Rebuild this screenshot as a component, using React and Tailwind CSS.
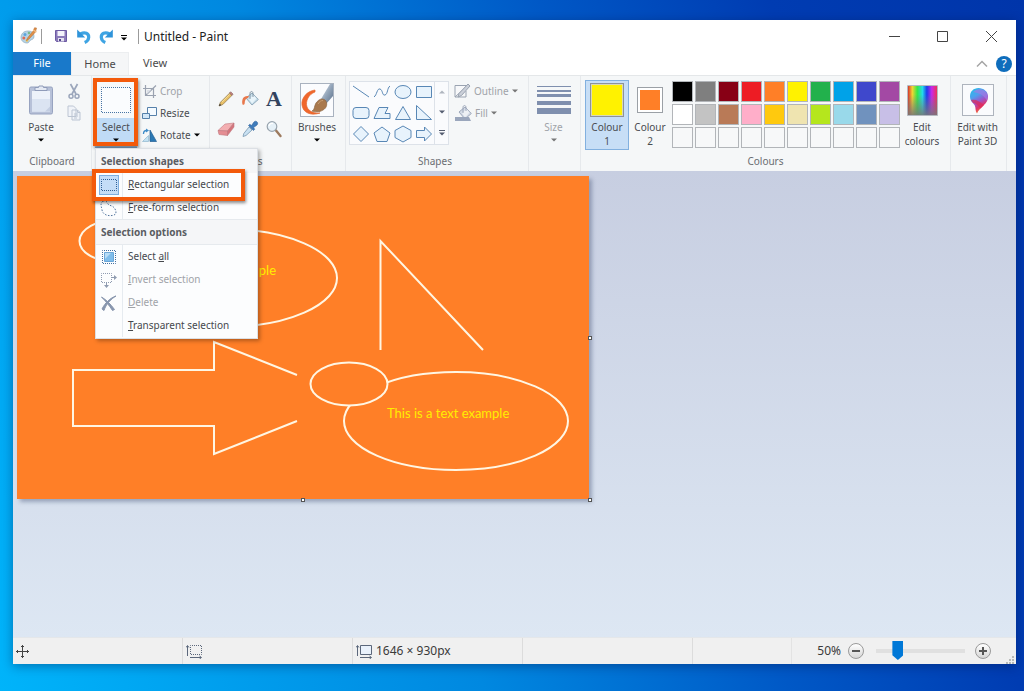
import React from "react";

const PALETTE = [
  ["Black", "bg-black"], ["Grey", "bg-[#7f7f7f]"], ["Dark red", "bg-[#880015]"], ["Red", "bg-[#ed1c24]"], ["Orange", "bg-[#ff7f27]"],
  ["Yellow", "bg-[#fff200]"], ["Green", "bg-[#22b14c]"], ["Turquoise", "bg-[#00a2e8]"], ["Indigo", "bg-[#3f48cc]"], ["Purple", "bg-[#a349a4]"],
  ["White", "bg-white"], ["Light grey", "bg-[#c3c3c3]"], ["Brown", "bg-[#b97a57]"], ["Rose", "bg-[#ffaec9]"], ["Gold", "bg-[#ffc90e]"],
  ["Light yellow", "bg-[#efe4b0]"], ["Lime", "bg-[#b5e61d]"], ["Light turquoise", "bg-[#99d9ea]"], ["Blue-grey", "bg-[#7092be]"], ["Lavender", "bg-[#c8bfe7]"],
];

function Caret({ className = "text-black" }) {
  return (
    <svg viewBox="0 0 6 4" className={`h-[4px] w-[6px] shrink-0 ${className}`}>
      <path d="M0 0.5h6L3 3.5z" fill="currentColor" />
    </svg>
  );
}

function Group({ label, className = "", children }) {
  return (
    <section className={`relative flex shrink-0 flex-col border-r border-[#e6e9ec] ${className}`}>
      <div className="flex h-[75px] items-start pt-1">{children}</div>
      {label && <h2 className="h-5 text-center leading-5 text-[#6a6d72]">{label}</h2>}
    </section>
  );
}

function BigButton({ icon, className = "", children, second, caret }) {
  return (
    <button className={`flex h-[70px] shrink-0 flex-col items-center ${className}`}>
      <span className="flex h-10 items-center justify-center">{icon}</span>
      <span className="leading-[14px]">{children}</span>
      {second && <span className="leading-[14px]">{second}</span>}
      {caret && <span className="flex h-3 items-center"><Caret className={caret} /></span>}
    </button>
  );
}

function SmallButton({ icon, caret, className = "text-[#4a4d52]", children }) {
  return (
    <button className={`flex h-[22px] items-center gap-[3px] whitespace-nowrap ${className}`}>
      {icon}
      <span>{children}</span>
      {caret && <Caret className={caret} />}
    </button>
  );
}

const PaintLogo = () => (
  <svg viewBox="0 0 18 18" className="h-[18px] w-[18px]">
    <path d="M8 4C3 4 1 7.500 1 10.500S3.500 16 7 16c2 0 2-1.500 3-2.500 1.500-1.300 4-.8 4-4C14 6 12 4 8 4z" fill="#b4d3e6" stroke="#8faabf" strokeWidth=".7" />
    <circle cx="5" cy="7.500" r="1.500" fill="#5da4dc" /><circle cx="9" cy="6" r="1.300" fill="#7fb98a" />
    <circle cx="3.800" cy="11" r="1.500" fill="#dd6c57" /><circle cx="7" cy="13.500" r="1.300" fill="#eec45c" />
    <path d="M16.500 1 14.500 0.800 13.500 3.500 7.500 11l-1 2.500 2.500-1.500 6.500-7z" fill="#e09048" stroke="#bb7136" strokeWidth=".6" />
    <path d="m13 3 3.500 2" stroke="#efc08a" strokeWidth="1.300" />
  </svg>
);

const SaveIcon = () => (
  <svg viewBox="0 0 12 12" className="h-3 w-3">
    <path d="M.5.5h11v11h-10l-1-1z" fill="#8b7bba" stroke="#6d5ba3" />
    <path d="M2.500 1h7v5h-7z" fill="#f4f3fa" /><path d="M3 8h6v3.500H3z" fill="#e5e3ef" /><path d="M4 9h2v2H4z" fill="#52438a" />
  </svg>
);

const UndoIcon = ({ flip }) => (
  <svg viewBox="0 0 14 15" className={flip ? "h-[15px] w-[14px] -scale-x-100" : "h-[15px] w-[14px]"}>
    <path d="M3.500 5C8 2.500 12 4.500 11.700 8.500c-.2 2.300-1.700 4-4 5" fill="none" stroke="#3ea4e3" strokeWidth="3.200" />
    <path d="M.2.500v8h8z" fill="#2f94da" />
  </svg>
);

const PasteIcon = () => (
  <svg viewBox="0 0 26 32" className="h-8 w-[26px]">
    <rect x="1.500" y="3" width="23" height="27" rx="1.500" fill="#b7c1d8" stroke="#97a3c0" />
    <path d="M4 7h18v20.500H4z" fill="#edf2fa" />
    <path d="M4 15h18v12.500H4z" fill="#dbe4f2" />
    <path d="M7 6.500h12v-3h-3.500L15 2h-4l-.5 1.500H7z" fill="#e4e9f3" stroke="#8f9bb9" />
    <path d="M17 27.500h5v-5z" fill="#c3cee2" />
  </svg>
);

const CutIcon = () => (
  <svg viewBox="0 0 12 17" className="h-[17px] w-3" fill="none" stroke="#9ba6bb">
    <path d="M2.500 1 8 11M9.500 1 4 11" strokeWidth="1.700" />
    <circle cx="3" cy="13.300" r="2" strokeWidth="1.500" /><circle cx="9" cy="13.300" r="2" strokeWidth="1.500" />
  </svg>
);

const CopyIcon = () => (
  <svg viewBox="0 0 14 16" className="h-4 w-[14px]" fill="#f0f3f8" stroke="#bcc5d3">
    <path d="M1 1h5.500L9 3.500v8H1zM5 5h5.500L13 7.500V15H5z" />
    <path d="M10.500 5v2.500H13M7 9h4M7 11h4M7 13h3" fill="none" />
  </svg>
);

const CropIcon = () => (
  <svg viewBox="0 0 15 15" className="h-[15px] w-[15px]" fill="none" stroke="#9aa2b0" strokeWidth="1.200">
    <path d="M3.500 1v10.500H14M1 4.500h10.500V14M3.500 11.500 14 1.500" /><path d="M5 6v4l4-4z" fill="#dce0e7" stroke="none" />
  </svg>
);

const ResizeIcon = () => (
  <svg viewBox="0 0 15 15" className="h-[15px] w-[15px]" fill="#f4faff" stroke="#5580aa">
    <path d="M5.500 1.500h9v8h-9z" /><path d="M.5 7.500h7v5h-7z" fill="#d2e7f8" />
  </svg>
);

const RotateIcon = () => (
  <svg viewBox="0 0 15 15" className="h-[15px] w-[15px]">
    <path d="M.5 13.500h6v-6z" fill="#c3e2f3" stroke="#8fb7ce" strokeWidth=".7" />
    <path d="M8 13.500h6.500L8 2z" fill="#2a78b4" stroke="#225e92" strokeWidth=".7" />
    <path d="M1.500 6c0-3 1-3.500 3-3.500" fill="none" stroke="#3f8cc8" strokeWidth="1.300" /><path d="M4 .5v4l3-2z" fill="#3f8cc8" />
  </svg>
);

const PencilIcon = () => (
  <svg viewBox="0 0 18 18" className="h-[18px] w-[18px]">
    <path d="m2 16 1.500-3.800 9.200-9.200 2.300 2.300-9.200 9.200z" fill="#e8c068" stroke="#8d7447" strokeWidth=".7" />
    <path d="m12.500 3 1.200-1.200 2.400 2.400-1.100 1.200z" fill="#c98480" stroke="#7c5a58" strokeWidth=".6" />
    <path d="m2 16 .8-2.200 1.500 1.400z" fill="#333" /><path d="m5 12 7.500-7.500" stroke="#fae4a0" strokeWidth=".8" />
  </svg>
);
const BucketIcon = ({ grey }) => (
  <svg viewBox="0 0 18 18" className="h-[18px] w-[18px]">
    <path d="m5 8 6-5 6.300 6.500L11 15z" fill={grey ? "#d4dbe6" : "#c8dfeb"} stroke={grey ? "#96a1b5" : "#87a2b4"} strokeWidth=".9" />
    <path d="m8 9 4.500-4 3 3.500-4.500 5z" fill={grey ? "#edf0f5" : "#e9f5fb"} />
    <path d="M9 9V3.500C9 .8 12 .8 12 3.500V7" fill="none" stroke={grey ? "#96a1b5" : "#7d909f"} strokeWidth=".9" />
    {grey ? <path d="M1 13h14l2 4H1z" fill="#9aa6bc" /> : <path d="M8 6C4.500 5.500 2 7 1.500 9.500c-.4 1.500-.5 3 0 5 1.200.8 2.200 0 2.200-1.500C3.800 10 5 8.500 7 8z" fill="#e8784c" />}
  </svg>
);
const EraserIcon = () => (
  <svg viewBox="0 0 18 18" className="h-[18px] w-[18px]" stroke="#c07880" strokeWidth=".6">
    <path d="m1 10.500 7-6.500 9-1-6.500 8z" fill="#f3aeb1" /><path d="m1 10.500 9.500.5v4.500L2 14.500z" fill="#e58e93" /><path d="m10.500 11 6.500-8v4l-6.500 8.500z" fill="#d4747c" />
  </svg>
);
const PickerIcon = () => (
  <svg viewBox="0 0 18 18" className="h-[18px] w-[18px]">
    <path d="m8 7 3 3-6 5.500-3 1 .8-3z" fill="#c9e1f2" stroke="#7696ae" strokeWidth=".8" />
    <path d="m7.500 5.500 1.300-1.200 1.700 1.200L13 2c2-2.200 5 .8 3 3l-3.500 2.600 1.200 1.700-1.300 1.200z" fill="#3f7cbb" stroke="#2f629b" strokeWidth=".6" />
  </svg>
);
const ZoomIcon = () => (
  <svg viewBox="0 0 18 18" className="h-[18px] w-[18px]">
    <path d="m11 10.500 4.500 5.500" stroke="#9d7a5e" strokeWidth="2.400" strokeLinecap="round" />
    <circle cx="7" cy="6.500" r="4.800" fill="#e6f1f8" stroke="#98a4ae" strokeWidth="1.200" /><path d="M4 6c.5-2 2-3 4-2.500" fill="none" stroke="white" strokeWidth="1.300" />
  </svg>
);

const BrushArt = () => (
  <svg viewBox="0 0 34 34" className="h-[34px] w-[34px]">
    <defs><linearGradient id="steel" x2="1" y2="1"><stop stopColor="#e3eaf2" /><stop offset=".5" stopColor="#93a5b9" /><stop offset="1" stopColor="#5b708a" /></linearGradient></defs>
    <rect x=".5" y=".5" width="33" height="33" fill="#fbfcfe" stroke="#a9b2bf" />
    <path d="M15 7C7 8 1 15 2 22c1 8 9 11 18 8-5 .5-11-1-13-6-2-6 2-13 8-15z" fill="#f0672c" stroke="#e4672f" strokeWidth=".7" />
    <path d="M21 16 30 1h3v12l-7 8z" fill="url(#steel)" />
    <path d="M12 28c3-1 2-5 4-8 3-4 6-5 9-3 3 3 2 8-2 10-4 2.500-8 2-11 1z" fill="#a9794d" stroke="#8c6440" strokeWidth=".7" />
    <path d="M18 21c1.500-2.500 3-3.500 5-3.500" fill="none" stroke="#c9a074" />
  </svg>
);

const SHAPES = [
  ["Line", <path d="m1 3 16 11" />],
  ["Curve", <path d="M1 14c3-2 3-9 6-8s2 7 5 6 2-7 5-9" />],
  ["Oval", <ellipse cx="9" cy="9" rx="8" ry="6.500" />],
  ["Rectangle", <path d="M1.500 3.500h15v11h-15z" />],
  ["Rounded rectangle", <rect x="1" y="3.500" width="16" height="11" rx="3" />],
  ["Polygon", <path d="M6 3.500h9l-3 6h5v5H1z" />],
  ["Triangle", <path d="M9 2.500 16.500 15.500h-15z" />],
  ["Right triangle", <path d="M1.500 1.500v14h15z" />],
  ["Diamond", <path d="m9 1.500 7.500 7.500L9 16.500 1.500 9z" />],
  ["Pentagon", <path d="m9 2 8 6-3 8.500H4L1 8z" />],
  ["Hexagon", <path d="m9 1 8 4.500v7L9 17l-8-4.500v-7z" />],
  ["Right arrow", <path d="M1.500 5.500h8V2l7 7-7 7v-3.500h-8z" />],
];

const OutlineIcon = () => (
  <svg viewBox="0 0 17 16" className="h-4 w-[17px]" stroke="#9aa3b1">
    <path d="M1 2.500h12.500L1 14z" fill="#f7f8fa" /><path d="M1 14h11V8" fill="none" /><path d="m4 14 1-3.500L14 1l2 2-8.500 9.500z" fill="#cbd0d9" />
  </svg>
);

const SpectrumIcon = () => (
  <svg viewBox="0 0 31 31" className="h-[31px] w-[31px]">
    <defs>
      <linearGradient id="hue"><stop offset="0" stopColor="#d63530" /><stop offset=".15" stopColor="#f3d432" /><stop offset=".32" stopColor="#33e748" /><stop offset=".5" stopColor="#23dbea" /><stop offset=".65" stopColor="#1c3cec" /><stop offset=".82" stopColor="#ca28e8" /><stop offset="1" stopColor="#ed3155" /></linearGradient>
      <linearGradient id="sat" x2="0" y2="1"><stop offset=".3" stopColor="#777" stopOpacity="0" /><stop offset="1" stopColor="#777" stopOpacity=".9" /></linearGradient>
    </defs>
    <path d="M1 1h29v29H1z" fill="url(#hue)" /><path d="M.5.5h30v30H.5z" fill="url(#sat)" stroke="#b4b9c0" />
  </svg>
);

const Paint3DIcon = () => (
  <svg viewBox="0 0 32 32" className="h-8 w-8">
    <defs><linearGradient id="drop" x1=".2" y1="0" x2=".6" y2="1"><stop stopColor="#27bde9" /><stop offset=".3" stopColor="#4e9fee" /><stop offset=".55" stopColor="#9b55cb" /><stop offset=".75" stopColor="#df346f" /><stop offset="1" stopColor="#f48a27" /></linearGradient></defs>
    <rect x=".5" y=".5" width="31" height="31" fill="#fafbfd" stroke="#aeb4bd" />
    <path d="M16.500 4C11.500 4 8 7.500 8 12.500c0 5 3.500 6.500 4.800 9C14 24 13 27 15 29.500c1-3 4-5.500 7-8.500 2.500-2.300 4-5 4-8.500C26 7.500 21.500 4 16.500 4z" fill="url(#drop)" />
    <path d="M11 8c3-3 8-4 12-1 3 3 3 7 2 10-2-5-7-8-14-9z" fill="#a07be6" opacity=".7" />
    <path d="M9 16c5-1 8 1 13 5l-3.500 3.500C16 21 13 19 11 19z" fill="#e02a58" opacity=".7" />
  </svg>
);

const dotted = "h-[18px] w-[18px]";
const RectSelectIcon = () => (
  <svg viewBox="0 0 18 18" className={dotted}><path d="M1.500 3.500h15v11h-15z" fill="none" stroke="#2f5f94" strokeDasharray="1 1" strokeDashoffset=".5" /></svg>
);
const FreeFormIcon = () => (
  <svg viewBox="0 0 18 18" className={dotted}><path d="M3 2c3-1 4 1 5 3s5 1 7 5 1 6-3 6.500S3 16 2 11 0 5 3 2z" fill="none" stroke="#52759e" strokeDasharray="1.500 1.500" /></svg>
);
const SelectAllIcon = () => (
  <svg viewBox="0 0 18 18" className={dotted}><path d="M2.500 2.500h13v13h-13z" fill="none" stroke="#426e9e" strokeDasharray="1 1" strokeDashoffset=".5" /><path d="M4.500 4.500h9v9h-9z" fill="#7fbdeb" stroke="#6ba7d8" /><path d="M5 5h6l-6 6z" fill="#b7dcf6" /></svg>
);
const InvertIcon = () => (
  <svg viewBox="0 0 18 18" className={dotted}><path d="M1.500 2.500h10v9h-10z" fill="none" stroke="#8f9bb0" strokeDasharray="1 1" strokeDashoffset=".5" /><path d="M12 6.500h3M6.500 12v3" fill="none" stroke="#8f9bb0" /><path d="M14 4v5l3-2.500zM4 14h5l-2.500 3z" fill="#8f9bb0" /></svg>
);
const DeleteIcon = () => (
  <svg viewBox="0 0 18 18" className={dotted}><path d="M1.500 3c5 3 9 7 13 12.500L12.500 16.500C9 11 5.500 7 1.500 3zM16 2C11 5 6 10 4 16.500L2 15C5 9 10 4 16 2z" fill="#8896ae" stroke="#8896ae" /></svg>
);

function MenuItem({ icon, disabled, active, accel, before = "", after = "" }) {
  return (
    <li role="none" className="relative">
      <button role="menuitem" disabled={disabled} className={`flex h-[23px] w-full items-center whitespace-nowrap ${disabled ? "text-[#a0a3a8]" : "text-[#45484d]"}`}>
        <span className="flex h-full w-[27px] items-center justify-center border-r border-[#e6ebf0]">
          <span className={active ? "flex h-5 w-5 items-center justify-center border border-[#7eafe0] bg-[#c4ddf7]" : "flex h-5 w-5 items-center justify-center"}>{icon}</span>
        </span>
        <span className="pl-[5px]">{before}<u>{accel}</u>{after}</span>
      </button>
      {active && <span className="pointer-events-none absolute -left-1 -top-1 right-3 z-10 h-8 border-4 border-[#f35a0b] shadow-[1px_2px_3px_rgba(0,0,0,0.45)]" />}
    </li>
  );
}

function SelectionMenu() {
  const heading = "whitespace-nowrap bg-[#f5f6f8] pl-[5px] font-bold text-[#5a5d62]";
  return (
    <div role="menu" aria-label="Select" className="absolute left-[3px] top-[72px] z-10 w-[163px] border border-[#dce0e5] bg-[#fcfdfe] pb-px shadow-[2px_2px_4px_rgba(0,0,0,0.3)]">
      <h3 className={`${heading} h-6 leading-6`}>Selection shapes</h3>
      <ul role="none">
        <MenuItem icon={<RectSelectIcon />} active accel="R" after="ectangular selection" />
        <MenuItem icon={<FreeFormIcon />} accel="F" after="ree-form selection" />
      </ul>
      <h3 className={`${heading} h-[26px] border-y border-[#e6eaee] leading-6`}>Selection options</h3>
      <ul role="none">
        <MenuItem icon={<SelectAllIcon />} before="Select " accel="a" after="ll" />
        <MenuItem icon={<InvertIcon />} disabled accel="I" after="nvert selection" />
        <MenuItem icon={<DeleteIcon />} disabled accel="D" after="elete" />
        <MenuItem accel="T" after="ransparent selection" />
      </ul>
    </div>
  );
}

function TitleBar() {
  return (
    <header className="flex h-8 shrink-0 items-center bg-white pl-[7px]">
      <PaintLogo />
      <span className="ml-[3px] h-[15px] w-px bg-[#9b9b9b]" />
      <button aria-label="Save" className="ml-[13px]"><SaveIcon /></button>
      <button aria-label="Undo" className="ml-[10px]"><UndoIcon /></button>
      <button aria-label="Redo" className="ml-2"><UndoIcon flip /></button>
      <button aria-label="Customise toolbar" className="ml-2 flex flex-col items-center gap-px pt-[3px]">
        <span className="h-px w-[6px] bg-black" /><Caret />
      </button>
      <span className="ml-[11px] h-[15px] w-px bg-[#9b9b9b]" />
      <h1 className="ml-[5px] pt-px text-[12px] text-[#222]">Untitled - Paint</h1>
      <div className="ml-auto flex h-full items-center text-[#444]">
        <button aria-label="Minimise" className="flex w-12 justify-center"><svg viewBox="0 0 11 11" className="h-[11px] w-[11px]"><path d="M0 5.500h11" stroke="currentColor" /></svg></button>
        <button aria-label="Maximise" className="flex w-12 justify-center"><svg viewBox="0 0 11 11" className="h-[11px] w-[11px]"><path d="M.5.5h10v10H.5z" fill="none" stroke="currentColor" /></svg></button>
        <button aria-label="Close" className="flex w-[50px] justify-center"><svg viewBox="0 0 11 11" className="h-[11px] w-[11px]"><path d="m0 0 11 11M11 0 0 11" stroke="currentColor" /></svg></button>
      </div>
    </header>
  );
}

function Tabs() {
  return (
    <nav className="flex h-[23px] shrink-0 items-stretch bg-white text-[11px] text-[#4a4a4a]">
      <button className="w-[58px] bg-[#1979ca] text-white">File</button>
      <button className="w-[58px] border-x border-t border-[#eceef0] bg-[#f5f6f7]">Home</button>
      <button className="w-[52px]">View</button>
      <div className="ml-auto flex items-center gap-2 pr-1">
        <button aria-label="Collapse the ribbon"><svg viewBox="0 0 12 8" className="h-2 w-3"><path d="m1 6.500 5-5 5 5" fill="none" stroke="#a5a5a5" strokeWidth="1.500" /></svg></button>
        <button aria-label="Help" className="flex h-4 w-4 items-center justify-center rounded-full bg-[#0f6dbc] text-[12px] leading-4 text-white">?</button>
      </div>
    </nav>
  );
}

function Ribbon() {
  return (
    <div className="flex h-24 shrink-0 border-t border-[#e4e7e9] bg-[#f5f7f8] text-[10px] text-[#4a4d52]">
      <Group label="Clipboard" className="w-[79px]">
        <BigButton className="ml-2 w-10" icon={<PasteIcon />} caret="text-black">Paste</BigButton>
        <div className="ml-[6px] flex flex-col items-center gap-[5px] pt-[3px]">
          <button aria-label="Cut"><CutIcon /></button>
          <button aria-label="Copy"><CopyIcon /></button>
        </div>
      </Group>

      <Group className="w-[118px]">
        <button aria-haspopup="menu" aria-expanded="true" className="relative ml-[3px] flex h-[68px] w-[42px] shrink-0 flex-col items-center border-b border-[#8bb5e0] bg-gradient-to-b from-[#f6f8fa] from-[57%] to-[#c0dbf6] to-[57%]">
          <span className="flex h-10 items-center">
            <svg viewBox="0 0 30 26" className="h-[26px] w-[30px]"><path d="M.5.500h29v25H.5z" fill="#fafcfe" stroke="#4774a4" strokeDasharray="1 1" strokeDashoffset=".5" /></svg>
          </span>
          <span className="leading-[14px]">Select</span>
          <span className="flex h-3 items-center"><Caret /></span>
          <span className="pointer-events-none absolute -left-[2px] -right-px -top-[2px] h-[68px] border-4 border-[#f35a0b] shadow-[1px_2px_3px_rgba(0,0,0,0.45)]" />
        </button>
        <div className="ml-[5px] flex flex-col items-start">
          <SmallButton icon={<CropIcon />} className="text-[#a0a3a8]">Crop</SmallButton>
          <SmallButton icon={<ResizeIcon />}>Resize</SmallButton>
          <SmallButton icon={<RotateIcon />} caret="text-black">Rotate</SmallButton>
        </div>
        <SelectionMenu />
      </Group>

      <Group label="Tools" className="w-[82px]">
        <div className="ml-1 mt-1 grid grid-cols-[repeat(3,24px)] grid-rows-[repeat(2,30px)] place-items-center">
          <button aria-label="Pencil"><PencilIcon /></button>
          <button aria-label="Fill with colour"><BucketIcon /></button>
          <button className="font-['Liberation_Serif',serif] text-[22px] font-bold leading-[22px] text-[#32435e]">A</button>
          <button aria-label="Eraser"><EraserIcon /></button>
          <button aria-label="Colour picker"><PickerIcon /></button>
          <button aria-label="Magnifier"><ZoomIcon /></button>
        </div>
      </Group>

      <Group className="w-[54px]">
        <BigButton className="w-[50px]" icon={<BrushArt />} caret="text-black">Brushes</BigButton>
      </Group>

      <Group label="Shapes" className="w-[183px] pr-1">
        <div className="ml-[3px] mt-px flex h-[64px] border border-[#dde2e9] bg-[#fafbfd]">
          <div className="grid grid-cols-[repeat(4,21px)] place-items-center">
            {SHAPES.map(([name, shape]) => (
              <button key={name} aria-label={name}>
                <svg viewBox="0 0 18 18" className="h-[18px] w-[18px]" fill={name === "Line" || name === "Curve" ? "none" : "#e8f3fc"} stroke="#5887b5" strokeWidth="1">{shape}</svg>
              </button>
            ))}
          </div>
          <div className="flex w-[14px] flex-col items-center justify-around border-l border-[#dde2e9]">
            <button aria-label="Previous shapes" className="rotate-180"><Caret className="text-[#afb5bf]" /></button>
            <button aria-label="Next shapes"><Caret className="text-[#555d70]" /></button>
            <button aria-label="All shapes" className="flex flex-col items-center gap-px"><span className="h-px w-[6px] bg-[#555d70]" /><Caret className="text-[#555d70]" /></button>
          </div>
        </div>
        <div className="ml-[5px] flex flex-col items-start text-[#a0a3a8]">
          <SmallButton icon={<OutlineIcon />} caret="text-[#777]" className="">Outline</SmallButton>
          <SmallButton icon={<BucketIcon grey />} caret="text-[#777]" className="">Fill</SmallButton>
        </div>
      </Group>

      <Group className="w-[52px]">
        <BigButton
          className="w-[49px] text-[#a0a3a8]"
          caret="text-[#777]"
          icon={<svg viewBox="0 0 34 30" className="h-[30px] w-[34px]" fill="#7f8fae"><path d="M0 1h34v1H0zM0 5h34v2H0zM0 9h34v3H0zM0 16h34v4H0zM0 23h34v6H0z" /></svg>}
        >
          Size
        </BigButton>
      </Group>

      <Group label="Colours" className="w-[370px]">
        <BigButton className="ml-[4px] w-11 bg-[#c7def6] outline outline-1 -outline-offset-1 outline-[#82b0df]" second="1" icon={<span className="h-[34px] w-[34px] border border-[#8d9299] bg-[#fff200] outline outline-1 -outline-offset-2 outline-[#d8d9b8]" />}>Colour</BigButton>
        <BigButton className="w-[42px]" second="2" icon={<span className="h-[26px] w-[26px] border border-[#9ba0a6] bg-white p-[2px]"><span className="block h-full w-full bg-[#ff7f27]" /></span>}>Colour</BigButton>
        <div className="ml-px mt-px grid shrink-0 grid-cols-[repeat(10,21px)] gap-[2px]">
          {Array.from({ length: 30 }, (_, i) => {
            const [name, fill] = PALETTE[i] || ["Custom colour " + (i - 19), "bg-[#f7f8f9]"];
            return (
              <button key={name} aria-label={name} className="h-[21px] w-[21px] border border-[#b2b5b9] bg-white">
                <span className={`block h-full w-full ${fill}`} />
              </button>
            );
          })}
        </div>
        <BigButton className="w-11" second="colours" icon={<SpectrumIcon />}>Edit</BigButton>
      </Group>

      <Group className="w-[56px]">
        <BigButton className="w-[53px] whitespace-nowrap" second="Paint 3D" icon={<Paint3DIcon />}>Edit with</BigButton>
      </Group>
    </div>
  );
}

const BUBBLES = [
  { place: "translate(-231 -143)", x: 490, anchor: "end", caption: "ple" },
  { place: "translate(0 0)", x: 370, anchor: "start", caption: "This is a text example" },
];

function Drawing() {
  const handle = "absolute h-1 w-1 border border-[#555] bg-white";
  return (
    <div className="relative h-[323px] w-[572px] bg-[#ff7f27] shadow-[3px_3px_4px_rgba(60,75,110,0.4)]">
      <svg viewBox="0 0 572 323" className="h-full w-full" fill="none" stroke="#fff6e3" strokeWidth="2">
        {BUBBLES.map(({ place, x, anchor, caption }) => (
          <g key={place} transform={place}>
            <ellipse cx="439" cy="245" rx="112" ry="49" />
            <ellipse cx="332" cy="208" rx="38.500" ry="21.500" fill="#ff7f27" />
            <text x={x} y="242" textAnchor={anchor} fill="#ffee00" stroke="none" className="font-[Lato,sans-serif] text-[13px]">{caption}</text>
          </g>
        ))}
        <path d="M280 199 197 166V194H56V250H197V278L280 245" />
        <path d="M363.500 174V65L466 174" />
      </svg>
      <span className={`${handle} -right-[3px] top-1/2 -translate-y-1/2`} />
      <span className={`${handle} -bottom-[3px] left-1/2 -translate-x-1/2`} />
      <span className={`${handle} -bottom-[3px] -right-[3px]`} />
    </div>
  );
}

const SizeArrows = ({ dashed }) => (
  <svg viewBox="0 0 17 15" className="h-[15px] w-[17px]" fill="none" stroke="#5b677b">
    <path d="M4.500 1.500h11v9h-11z" fill={dashed ? "none" : "#e9f1fb"} strokeDasharray={dashed ? "1 1" : undefined} strokeDashoffset=".5" />
    <path d="M1.500 12V2M0 3.500 1.500 1.500 3 3.500M4 13.500h11M13.500 12l2 1.500-2 1.500" />
  </svg>
);

const RoundButton = ({ label, d }) => (
  <button aria-label={label} className="flex h-4 w-4 shrink-0 items-center justify-center rounded-full border border-[#9a9a9a] bg-gradient-to-b from-white to-[#d6d6d6]">
    <svg viewBox="0 0 8 8" className="h-2 w-2"><path d={d} stroke="#555" strokeWidth="2" /></svg>
  </button>
);

function StatusBar() {
  const cell = "flex w-[170px] shrink-0 items-center border-r border-[#dcdcdc] pl-[3px]";
  return (
    <footer className="flex h-[27px] shrink-0 border-t border-[#e4e7ea] bg-[#f0f0f0] text-[12px] text-[#3a3a3a]">
      <div className={cell}>
        <svg viewBox="0 0 13 13" className="h-[13px] w-[13px]" fill="none" stroke="#444"><path d="M6.500 0v13M0 6.500h13M5 2l1.500-1.500L8 2M5 11l1.500 1.500L8 11M2 5 .5 6.500 2 8M11 5l1.500 1.500L11 8" /></svg>
      </div>
      <div className={cell}><SizeArrows dashed /></div>
      <div className={`${cell} gap-[3px]`}><SizeArrows />1646 × 930px</div>
      <div className={cell} />
      <div className="w-[99px] shrink border-r border-[#e3e3e3]" />
      <div className="relative ml-auto flex items-center pr-[25px]">
        <label htmlFor="zoom">50%</label>
        <span className="ml-[7px] flex"><RoundButton label="Zoom out" d="M0 4h8" /></span>
        <input
          id="zoom"
          type="range"
          defaultValue="21"
          className="ml-3 mr-[10px] h-[19px] w-[89px] appearance-none bg-transparent [&::-webkit-slider-runnable-track]:h-1 [&::-webkit-slider-runnable-track]:bg-[#e0e0e0] [&::-webkit-slider-thumb]:-mt-2 [&::-webkit-slider-thumb]:h-[19px] [&::-webkit-slider-thumb]:w-[11px] [&::-webkit-slider-thumb]:appearance-none [&::-webkit-slider-thumb]:bg-[#0078d7] [&::-webkit-slider-thumb]:[clip-path:polygon(0_0,100%_0,100%_75%,50%_100%,0_75%)]"
        />
        <RoundButton label="Zoom in" d="M0 4h8M4 0v8" />
        <svg viewBox="0 0 8 8" className="absolute bottom-0 right-[2px] h-2 w-2" fill="#b8bab8"><path d="M6 0h2v2H6zM3 3h2v2H3zM6 3h2v2H6zM0 6h2v2H0zM3 6h2v2H3zM6 6h2v2H6z" /></svg>
      </div>
    </footer>
  );
}

export default function App() {
  return (
    <div className="flex min-h-screen flex-col bg-[linear-gradient(70deg,#00b4fa_0%,#009cec_20%,#0088e0_38%,#0058c6_62%,#003cb2_80%,#0035aa_100%)] pb-[27px] pl-[13px] pr-2 pt-5 font-['Noto_Sans',sans-serif]">
      <div className="flex flex-1 flex-col shadow-[0_2px_10px_rgba(0,20,70,0.4)]">
        <TitleBar />
        <Tabs />
        <Ribbon />
        <main className="flex-1 bg-gradient-to-b from-[#c7cee1] to-[#dde7f3] pl-1 pt-[5px]">
          <Drawing />
        </main>
        <StatusBar />
      </div>
    </div>
  );
}
